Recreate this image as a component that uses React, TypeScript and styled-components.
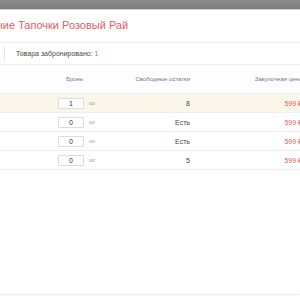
import React from 'react';
import styled, { createGlobalStyle } from 'styled-components';

const GlobalStyle = createGlobalStyle`
  html, body {
    margin: 0;
    padding: 0;
    background: #ffffff;
    font-family: "Liberation Sans", Arial, sans-serif;
  }
  #root {
    width: 300px;
    height: 300px;
    overflow: hidden;
  }
`;

const Page = styled.div`
  width: 300px;
  height: 300px;
  overflow: hidden;
  display: flex;
  flex-direction: column;
`;

const TopBar = styled.div`
  height: 9px;
  background: linear-gradient(#8c8c8c, #7e7e7e);
  border-bottom: 1px solid #cfcfcf;
  flex-shrink: 0;
`;

const Modal = styled.div`
  flex: 1;
  display: flex;
  flex-direction: column;
  border-bottom: 1px solid #ececec;
  box-shadow: 0 1px 2px rgba(0, 0, 0, 0.04);
  margin-bottom: 5px;
`;

const Title = styled.h1`
  margin: 0;
  height: 32px;
  line-height: 31px;
  font-size: 11px;
  font-weight: normal;
  color: #ea5a64;
  white-space: nowrap;
  margin-left: -59px;
  border-bottom: 1px solid #ededed;
`;

const Summary = styled.div`
  height: 21px;
  display: flex;
  align-items: center;
  border-bottom: 1px solid #ededed;
  font-size: 7px;
  color: #484848;
`;

const Divider = styled.div`
  width: 1px;
  height: 15px;
  background: #e6e6e6;
  margin-left: 4px;
  margin-right: 11px;
`;

const Accent = styled.span`
  color: #ea5a64;
  margin-left: 2px;
`;

const Table = styled.div`
  width: 302px;
`;

const Row = styled.div<{ $header?: boolean; $active?: boolean }>`
  display: grid;
  grid-template-columns: 52px 54px 84px 1fr;
  align-items: center;
  height: ${p => (p.$header ? '28px' : '18px')};
  background: ${p => (p.$active ? '#faf6e9' : p.$header ? '#fdfdfd' : '#ffffff')};
  border-bottom: 1px solid #eeeeee;
  font-size: ${p => (p.$header ? '6px' : '7px')};
  color: ${p => (p.$header ? '#777777' : '#484848')};
`;

const Cell = styled.div<{ $align?: 'left' | 'right'; $red?: boolean }>`
  color: ${p => (p.$red ? '#ea5a64' : 'inherit')};
  white-space: nowrap;
  overflow: hidden;
  display: flex;
  align-items: center;
  justify-content: ${p => (p.$align === 'right' ? 'flex-end' : 'flex-start')};
`;

const BookCell = styled.div`
  display: flex;
  align-items: center;
  padding-left: 6px;
`;

const HeaderBook = styled.div`
  padding-left: 14px;
`;

const QtyInput = styled.div`
  width: 24px;
  height: 9px;
  border: 1px solid #dcdcdc;
  border-radius: 1px;
  background: #fff;
  font-size: 7px;
  color: #333333;
  text-align: center;
  line-height: 9px;
`;

const Unit = styled.span`
  font-size: 5px;
  color: #999999;
  margin-left: 5px;
`;

const rows = [
  { qty: 1, rest: '8', price: '599 ₽', active: true },
  { qty: 0, rest: 'Есть', price: '599 ₽' },
  { qty: 0, rest: 'Есть', price: '599 ₽' },
  { qty: 0, rest: '5', price: '599 ₽' },
];

export default function App() {
  return (
    <Page>
      <GlobalStyle />
      <TopBar />
      <Modal>
        <Title>Бронирование Тапочки Розовый Рай</Title>
        <Summary>
          <Divider />
          Товара забронировано: <Accent>1</Accent>
        </Summary>
        <Table>
          <Row $header>
            <Cell />
            <HeaderBook>Бронь</HeaderBook>
            <Cell $align="right">Свободные остатки</Cell>
            <Cell $align="right">Закупочная цена</Cell>
          </Row>
          {rows.map((r, i) => (
            <Row key={i} $active={r.active}>
              <Cell />
              <BookCell>
                <QtyInput>{r.qty}</QtyInput>
                <Unit>шт</Unit>
              </BookCell>
              <Cell $align="right">{r.rest}</Cell>
              <Cell $align="right" $red>
                {r.price}
              </Cell>
            </Row>
          ))}
        </Table>
      </Modal>
    </Page>
  );
}
